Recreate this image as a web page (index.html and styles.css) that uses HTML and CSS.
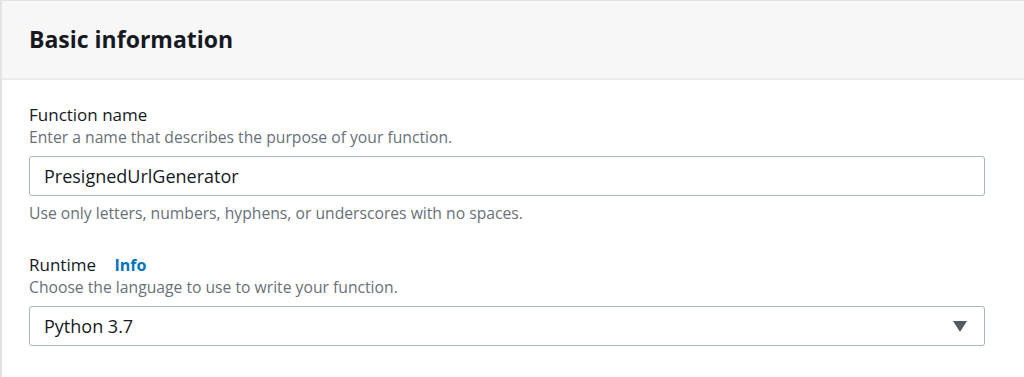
FILE: index.html
```html
<!DOCTYPE html>
<html lang="en">
<head>
    <meta charset="UTF-8">
    <meta name="viewport" content="width=device-width, initial-scale=1.0">
    <title>Basic information</title>
    <link rel="stylesheet" href="styles.css">
</head>
<body>
    <section class="panel">
        <header class="panel-header">
            <h2>Basic information</h2>
        </header>
        <div class="panel-body">
            <div class="field">
                <label class="field-label" for="function-name">Function name</label>
                <p class="field-desc">Enter a name that describes the purpose of your function.</p>
                <input id="function-name" class="text-input" type="text" value="PresignedUrlGenerator">
                <p class="field-constraint">Use only letters, numbers, hyphens, or underscores with no spaces.</p>
            </div>
            <div class="field">
                <div class="field-label">Runtime <a class="info-link" href="#">Info</a></div>
                <p class="field-desc">Choose the language to use to write your function.</p>
                <div class="select-box">
                    <span>Python 3.7</span>
                    <svg class="caret" width="14" height="11" viewBox="0 0 14 11"><polygon points="0,0 14,0 7,11" fill="#545b64"/></svg>
                </div>
            </div>
        </div>
    </section>
</body>
</html>
```

FILE: styles.css
```css
html, body {
    margin: 0;
    padding: 0;
    overflow: hidden;
    background: #fff;
}
body {
    font-family: "Open Sans", Arial, sans-serif;
    color: #16191f;
}
.panel {
    width: 1060px;
    border-left: 2px solid #e1e4e4;
    border-top: 1px solid #e1e4e4;
    min-height: 376px;
}
.panel-header {
    background: #f7f7f7;
    border-bottom: 2px solid #eaeded;
    height: 77px;
    padding: 0 27px;
    display: flex;
    align-items: center;
}
.panel-header h2 {
    margin: 0;
    font-size: 23px;
    font-weight: 700;
    line-height: 28px;
    padding-bottom: 2px;
}
.panel-body {
    padding: 24px 27px 0;
}
.field {
    margin-bottom: 30px;
}
.field-label {
    display: block;
    font-size: 17px;
    line-height: 22px;
}
.info-link {
    margin-left: 14px;
    font-size: 16px;
    font-weight: 700;
    color: #0073bb;
    text-decoration: none;
}
.field-desc, .field-constraint {
    margin: 0;
    font-size: 15.7px;
    line-height: 22px;
    color: #687078;
}
.field-desc {
    margin-bottom: 8px;
}
.field-constraint {
    margin-top: 6px;
}
.text-input, .select-box {
    box-sizing: border-box;
    width: 956px;
    height: 40px;
    border: 1px solid #aab7b8;
    border-radius: 3px;
    padding: 0 14px;
    font-family: inherit;
    font-size: 18px;
    color: #16191f;
    background: #fff;
}
.text-input {
    display: block;
    outline: none;
}
.select-box {
    display: flex;
    align-items: center;
    justify-content: space-between;
    padding-right: 17px;
}
```
